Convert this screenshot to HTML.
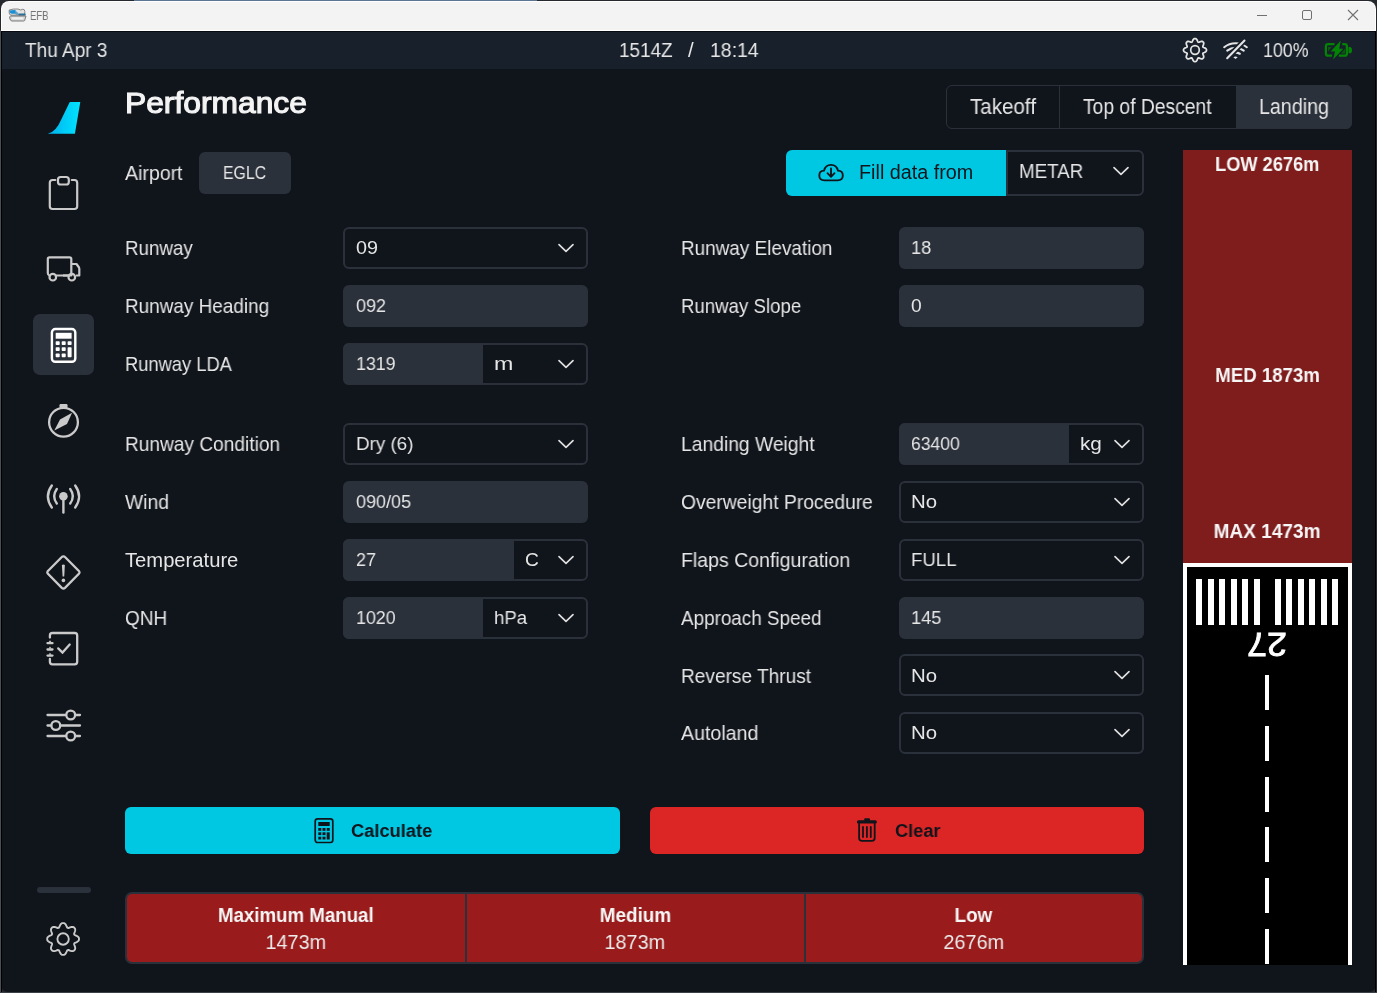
<!DOCTYPE html>
<html><head><meta charset="utf-8">
<style>
*{margin:0;padding:0;box-sizing:border-box}
html,body{width:1377px;height:993px;overflow:hidden;background:#25282d;font-family:"Liberation Sans",sans-serif}
.a{position:absolute}
.t{position:absolute;white-space:nowrap;line-height:1;will-change:transform}
</style></head><body>

<div class="a" style="left:134px;top:0px;width:403px;height:1px;background:#5d7594"></div>
<div class="a" style="left:0px;top:992px;width:1377px;height:1px;background:#3a3f48"></div>
<div class="a" style="left:0px;top:30px;width:1px;height:962px;background:#4a4f56"></div>
<div class="a" style="left:1px;top:1px;width:1375px;height:991px;background:#10141b;border-radius:8px 8px 7px 7px"></div>
<div class="a" style="left:1px;top:1px;width:1375px;height:30px;background:#ffffff;border-radius:8px 8px 0 0"></div>
<div class="a" style="left:2px;top:2px;width:1373px;height:28px;background:#f3f3f3;border-radius:7px 7px 0 0"></div>
<div class="a" style="left:1px;top:31px;width:1375px;height:1px;background:#060b12"></div>
<div class="a" style="left:1px;top:32px;width:1375px;height:37px;background:#18202b"></div>
<div class="a" style="left:1px;top:31px;width:1px;height:961px;background:#000000"></div>
<div class="a" style="left:1375px;top:31px;width:1px;height:961px;background:#000000"></div>
<svg class="a" style="left:8px;top:8px" width="19" height="14" viewBox="0 0 19 14">
<path d="M1.2 2 Q5 0.6 10 1 L12.8 2 L14.8 1.2 Q16.8 1.2 16.8 3.5 V7.2 H3 Q1.2 6.5 1.2 5 Z" fill="#e2e2e2" stroke="#7a7a7a" stroke-width="0.9"/>
<path d="M1.6 2.4 Q4 1.8 7.5 2 L8 5.8 L3.5 5.8 Q1.8 5 1.6 4 Z" fill="#1e8fd2"/>
<path d="M8 3 L10.5 5.5 L9.5 7 L7.5 6.5 Z" fill="#3d8fc0" opacity="0.8"/>
<rect x="10.3" y="5.6" width="7.3" height="1.8" rx="0.6" fill="#2b6e96"/>
<path d="M2.5 8 H18 L16.6 12.6 Q16.4 13 15.8 13 H4 Q3 13 2.6 12.2 L1.6 10 Q1.6 8.5 2.5 8 Z" fill="#d6d6d6" stroke="#6f6f6f" stroke-width="0.9"/>
<rect x="4.2" y="9.3" width="11" height="2" fill="#f0f0f0"/>
</svg>
<div class="t" style="left:30.04px;top:8.83px;font-size:13.08px;color:#757575;transform:scaleX(0.7254);transform-origin:0 0;">EFB</div>
<div class="a" style="left:1257px;top:15px;width:10px;height:1px;background:#707070"></div>
<div class="a" style="left:1302px;top:10px;width:10px;height:10px;border:1px solid #707070;border-radius:2px"></div>
<svg class="a" style="left:1347px;top:9px" width="12" height="12" viewBox="0 0 12 12"><path d="M1 1 L11 11 M11 1 L1 11" stroke="#707070" stroke-width="1.1"/></svg>
<div class="t" style="left:25.42px;top:39.93px;font-size:20.06px;color:#e6e6e6;transform:scaleX(0.9475);transform-origin:0 0;">Thu Apr 3</div>
<div class="t" style="left:618.58px;top:39.88px;font-size:20.35px;color:#e6e6e6;transform:scaleX(0.9289);transform-origin:0 0;">1514Z</div>
<div class="t" style="left:687.80px;top:39.88px;font-size:20.35px;color:#e6e6e6;transform:scaleX(1.0000);transform-origin:0 0;">/</div>
<div class="t" style="left:709.54px;top:39.88px;font-size:20.35px;color:#e6e6e6;transform:scaleX(0.9562);transform-origin:0 0;">18:14</div>
<div class="t" style="left:1263.06px;top:40.16px;font-size:20.20px;color:#e6e6e6;transform:scaleX(0.8817);transform-origin:0 0;">100%</div>
<svg class="a" style="left:1181.1px;top:36.1px" width="28" height="28" viewBox="0 0 28 28"><path d="M14.00 2.60 L14.56 2.65 L15.11 2.88 L15.60 3.33 L16.01 3.98 L16.35 4.71 L16.64 5.41 L16.92 5.95 L17.25 6.25 L17.70 6.28 L18.28 6.09 L18.98 5.80 L19.74 5.52 L20.48 5.36 L21.15 5.38 L21.70 5.61 L22.13 5.97 L22.49 6.40 L22.72 6.95 L22.74 7.62 L22.58 8.36 L22.30 9.12 L22.01 9.82 L21.82 10.40 L21.85 10.85 L22.15 11.18 L22.69 11.46 L23.39 11.75 L24.12 12.09 L24.77 12.50 L25.22 12.99 L25.45 13.54 L25.50 14.10 L25.45 14.66 L25.22 15.21 L24.77 15.70 L24.12 16.11 L23.39 16.45 L22.69 16.74 L22.15 17.02 L21.85 17.35 L21.82 17.80 L22.01 18.38 L22.30 19.08 L22.58 19.84 L22.74 20.58 L22.72 21.25 L22.49 21.80 L22.13 22.23 L21.70 22.59 L21.15 22.82 L20.48 22.84 L19.74 22.68 L18.98 22.40 L18.28 22.11 L17.70 21.92 L17.25 21.95 L16.92 22.25 L16.64 22.79 L16.35 23.49 L16.01 24.22 L15.60 24.87 L15.11 25.32 L14.56 25.55 L14.00 25.60 L13.44 25.55 L12.89 25.32 L12.40 24.87 L11.99 24.22 L11.65 23.49 L11.36 22.79 L11.08 22.25 L10.75 21.95 L10.30 21.92 L9.72 22.11 L9.02 22.40 L8.26 22.68 L7.52 22.84 L6.85 22.82 L6.30 22.59 L5.87 22.23 L5.51 21.80 L5.28 21.25 L5.26 20.58 L5.42 19.84 L5.70 19.08 L5.99 18.38 L6.18 17.80 L6.15 17.35 L5.85 17.02 L5.31 16.74 L4.61 16.45 L3.88 16.11 L3.23 15.70 L2.78 15.21 L2.55 14.66 L2.50 14.10 L2.55 13.54 L2.78 12.99 L3.23 12.50 L3.88 12.09 L4.61 11.75 L5.31 11.46 L5.85 11.18 L6.15 10.85 L6.18 10.40 L5.99 9.82 L5.70 9.12 L5.42 8.36 L5.26 7.62 L5.28 6.95 L5.51 6.40 L5.87 5.97 L6.30 5.61 L6.85 5.38 L7.52 5.36 L8.26 5.52 L9.02 5.80 L9.72 6.09 L10.30 6.28 L10.75 6.25 L11.08 5.95 L11.36 5.41 L11.65 4.71 L11.99 3.98 L12.40 3.33 L12.89 2.88 L13.44 2.65 L14.00 2.60Z" fill="none" stroke="#e4e4e4" stroke-width="1.75" stroke-linejoin="round"/><circle cx="14" cy="14" r="4.3" fill="none" stroke="#e4e4e4" stroke-width="1.7"/></svg>
<svg class="a" style="left:1215px;top:34px" width="40" height="30" viewBox="0 0 40 30">
<path d="M9.17 13.21 A18 18 0 0 1 31.83 13.21 M12.25 16.64 A13.4 13.4 0 0 1 28.75 16.64 M20.80 18.61 A8.6 8.6 0 0 1 24.80 19.75" fill="none" stroke="#e4e4e4" stroke-width="2.1" stroke-linecap="round"/>
<path d="M18.3 23.2 Q20.5 21.6 22.7 23.2 L20.5 25 Z" fill="#e4e4e4"/>
<path d="M12.2 24.2 L29.5 6.5" stroke="#18202b" stroke-width="5.6" stroke-linecap="butt"/>
<path d="M12.2 24.2 L29.5 6.5" stroke="#e4e4e4" stroke-width="2.1" stroke-linecap="round"/>
</svg>
<svg class="a" style="left:1318px;top:34px" width="40" height="30" viewBox="0 0 40 30">
<g fill="none" stroke="#038205" stroke-width="2.3" stroke-linejoin="round">
<path d="M16.5 10.2 H10.2 Q7.9 10.2 7.9 12.5 V19.4 Q7.9 21.7 10.2 21.7 H14"/>
<path d="M24.2 10.2 H26.6 Q28.9 10.2 28.9 12.5 V19.4 Q28.9 21.7 26.6 21.7 H20.8"/>
</g>
<path d="M30.5 13 H31.8 Q34 13 34 16.15 Q34 19.3 31.8 19.3 H30.5 Z" fill="#038205"/>
<path d="M10 13 H13.6 L10 17.8 Z M27 14.5 V19.6 H22.8 Z" fill="#0a5a0e"/>
<path d="M22.8 6.5 L12.6 17.4 H17 L15.1 25.4 L25.3 14.7 H21.2 Z" fill="#038205" stroke="#18202b" stroke-width="1.6" stroke-linejoin="round" paint-order="stroke"/>
</svg>
<svg class="a" style="left:44px;top:98px" width="40" height="40" viewBox="0 0 40 40">
<defs><linearGradient id="lg" x1="0" y1="0" x2="1" y2="0"><stop offset="0" stop-color="#00b0ee"/><stop offset="1" stop-color="#00e4ff"/></linearGradient></defs>
<path d="M26 4 L36.3 4 L30.9 35.8 L3.7 35.8 Q12 34 17 22 L25 5.5 Q25.5 4 26 4 Z" fill="url(#lg)"/></svg>
<svg class="a" style="left:43px;top:171px" width="40" height="44" viewBox="0 0 40 44">
<g fill="none" stroke="#cacaca" stroke-width="2.2" stroke-linecap="round">
<path d="M12.3 9 H9.5 Q6.8 9 6.8 11.7 V35.3 Q6.8 38 9.5 38 H31.5 Q34.2 38 34.2 35.3 V11.7 Q34.2 9 31.5 9 H28.8"/>
<rect x="15" y="6" width="10.8" height="7.5" rx="2.6"/>
</g></svg>
<svg class="a" style="left:43px;top:250px" width="42" height="36" viewBox="0 0 42 36">
<g fill="none" stroke="#cacaca" stroke-width="2.2" stroke-linejoin="round">
<path d="M6.5 25.5 Q4.8 25 4.8 23 V9 Q4.8 7.3 6.5 7.3 H26.6 Q28.3 7.3 28.3 9 V25.5 H12.5"/>
<path d="M28.3 14 H33.5 L36 17.5 Q36.3 18 36.3 19 V25.5 H33"/>
<path d="M20 25.5 H26"/>
<circle cx="9.8" cy="27.2" r="3.3"/><circle cx="28.8" cy="27.2" r="3.3"/>
</g></svg>
<div class="a" style="left:33px;top:314px;width:61px;height:61px;background:#2b313b;border-radius:7px"></div>
<svg class="a" style="left:49px;top:326px" width="30" height="38" viewBox="0 0 30 38">
<rect x="2.9" y="3" width="23.4" height="32.8" rx="3.4" fill="none" stroke="#ffffff" stroke-width="2.4"/>
<rect x="6.7" y="6.8" width="15.9" height="5.9" fill="#fff"/>
<rect x="6.7" y="15.2" width="4" height="3.8" rx="0.8" fill="#fff"/><rect x="12.7" y="15.2" width="4" height="3.8" rx="0.8" fill="#fff"/><rect x="18.6" y="15.2" width="4" height="3.8" rx="0.8" fill="#fff"/>
<rect x="6.7" y="21.2" width="4" height="3.8" rx="0.8" fill="#fff"/><rect x="12.7" y="21.2" width="4" height="3.8" rx="0.8" fill="#fff"/><rect x="18.6" y="21.2" width="4" height="10" rx="0.8" fill="#fff"/>
<rect x="6.7" y="27.4" width="4" height="3.8" rx="0.8" fill="#fff"/><rect x="12.7" y="27.4" width="4" height="3.8" rx="0.8" fill="#fff"/>
</svg>
<svg class="a" style="left:43px;top:400px" width="42" height="42" viewBox="0 0 42 42">
<circle cx="20.5" cy="22.2" r="14.4" fill="none" stroke="#cacaca" stroke-width="2.3"/>
<rect x="16.5" y="4" width="8" height="4" rx="1.2" fill="#cacaca"/>
<path d="M29.1 12.8 L24 24 L11.3 30.6 L17 19.5 Z" fill="#cacaca"/>
</svg>
<svg class="a" style="left:43px;top:476px" width="42" height="42" viewBox="0 0 42 42">
<g fill="none" stroke="#cacaca" stroke-width="2.4" stroke-linecap="round">
<path d="M8.8 9.5 Q1 20.5 8.8 31.5"/><path d="M32.2 9.5 Q40 20.5 32.2 31.5"/>
<path d="M13.8 13 Q8.5 20.3 13.8 27.5"/><path d="M27.2 13 Q32.5 20.3 27.2 27.5"/>
<path d="M20.4 21 V36.5"/>
</g><circle cx="20.4" cy="20.3" r="4.3" fill="#cacaca"/></svg>
<svg class="a" style="left:43px;top:552px" width="42" height="42" viewBox="0 0 42 42">
<path d="M20.4 4.3 Q21.4 4.3 22 5 L36.1 19.2 Q37 20.4 36.1 21.6 L22 35.8 Q20.4 37.2 18.8 35.8 L4.7 21.6 Q3.8 20.4 4.7 19.2 L18.8 5 Q19.4 4.3 20.4 4.3 Z" fill="none" stroke="#cacaca" stroke-width="2.3"/>
<path d="M18.9 13 Q20.4 11.8 21.9 13 L21.2 24.5 H19.6 Z" fill="#cacaca"/><circle cx="20.4" cy="28.4" r="1.8" fill="#cacaca"/>
</svg>
<svg class="a" style="left:43px;top:627px" width="42" height="42" viewBox="0 0 42 42">
<g fill="none" stroke="#cacaca" stroke-width="2.3" stroke-linecap="round">
<path d="M6.9 10.5 V8.5 Q6.9 6 9.4 6 H31.7 Q34.2 6 34.2 8.5 V34.8 Q34.2 37.3 31.7 37.3 H9.4 Q6.9 37.3 6.9 34.8 V32"/>
<path d="M4.5 16.2 H9.5 M4.5 22.5 H9.5 M4.5 28.6 H9.5"/>
<path d="M15.2 21.4 L19.5 25.6 L26.7 17.5"/>
</g>
<path d="M5.5 15.3 L7 13.3 L8.5 15.3 Z M5.5 21.6 L7 19.6 L8.5 21.6 Z M5.5 27.7 L7 25.7 L8.5 27.7 Z" fill="#cacaca"/>
</svg>
<svg class="a" style="left:43px;top:703px" width="42" height="42" viewBox="0 0 42 42">
<g fill="none" stroke="#cacaca" stroke-width="2.3" stroke-linecap="round">
<path d="M4.5 12 H22.8 M32.6 12 H37"/><circle cx="27.7" cy="12" r="4.4"/>
<path d="M4.5 22.5 H8 M17.7 22.5 H37"/><circle cx="12.8" cy="22.5" r="4.4"/>
<path d="M4.5 33 H22.8 M32.6 33 H37"/><circle cx="27.7" cy="33" r="4.4"/>
</g></svg>
<div class="a" style="left:37px;top:887px;width:54px;height:6px;background:#2b313b;border-radius:3px"></div>
<svg class="a" style="left:43px;top:919px" width="40" height="40" viewBox="0 0 40 40"><path d="M20.10 4.10 L20.88 4.17 L21.63 4.47 L22.32 5.06 L22.90 5.91 L23.39 6.87 L23.80 7.80 L24.21 8.51 L24.69 8.91 L25.32 8.97 L26.11 8.75 L27.06 8.39 L28.08 8.05 L29.10 7.87 L30.00 7.93 L30.75 8.25 L31.34 8.76 L31.85 9.35 L32.17 10.10 L32.23 11.00 L32.05 12.02 L31.71 13.04 L31.35 13.99 L31.13 14.78 L31.19 15.41 L31.59 15.89 L32.30 16.30 L33.23 16.71 L34.19 17.20 L35.04 17.78 L35.63 18.47 L35.93 19.22 L36.00 20.00 L35.93 20.78 L35.63 21.53 L35.04 22.22 L34.19 22.80 L33.23 23.29 L32.30 23.70 L31.59 24.11 L31.19 24.59 L31.13 25.22 L31.35 26.01 L31.71 26.96 L32.05 27.98 L32.23 29.00 L32.17 29.90 L31.85 30.65 L31.34 31.24 L30.75 31.75 L30.00 32.07 L29.10 32.13 L28.08 31.95 L27.06 31.61 L26.11 31.25 L25.32 31.03 L24.69 31.09 L24.21 31.49 L23.80 32.20 L23.39 33.13 L22.90 34.09 L22.32 34.94 L21.63 35.53 L20.88 35.83 L20.10 35.90 L19.32 35.83 L18.57 35.53 L17.88 34.94 L17.30 34.09 L16.81 33.13 L16.40 32.20 L15.99 31.49 L15.51 31.09 L14.88 31.03 L14.09 31.25 L13.14 31.61 L12.12 31.95 L11.10 32.13 L10.20 32.07 L9.45 31.75 L8.86 31.24 L8.35 30.65 L8.03 29.90 L7.97 29.00 L8.15 27.98 L8.49 26.96 L8.85 26.01 L9.07 25.22 L9.01 24.59 L8.61 24.11 L7.90 23.70 L6.97 23.29 L6.01 22.80 L5.16 22.22 L4.57 21.53 L4.27 20.78 L4.20 20.00 L4.27 19.22 L4.57 18.47 L5.16 17.78 L6.01 17.20 L6.97 16.71 L7.90 16.30 L8.61 15.89 L9.01 15.41 L9.07 14.78 L8.85 13.99 L8.49 13.04 L8.15 12.02 L7.97 11.00 L8.03 10.10 L8.35 9.35 L8.86 8.76 L9.45 8.25 L10.20 7.93 L11.10 7.87 L12.12 8.05 L13.14 8.39 L14.09 8.75 L14.88 8.97 L15.51 8.91 L15.99 8.51 L16.40 7.80 L16.81 6.87 L17.30 5.91 L17.88 5.06 L18.57 4.47 L19.32 4.17 L20.10 4.10Z" fill="none" stroke="#cacaca" stroke-width="1.9" stroke-linejoin="round"/><circle cx="20.1" cy="20" r="5.7" fill="none" stroke="#cacaca" stroke-width="1.9"/></svg>
<div class="t" style="left:124.96px;top:88.27px;font-size:29.94px;color:#f4f4f4;transform:scaleX(1.0616);transform-origin:0 0;-webkit-text-stroke:1.15px #f4f4f4;">Performance</div>
<div class="a" style="left:946px;top:85px;width:406px;height:44px;border:1.5px solid #2b313b;border-radius:6px"></div>
<div class="a" style="left:1235.5px;top:85px;width:116.5px;height:44px;background:#2b313b;border-radius:0 6px 6px 0"></div>
<div class="a" style="left:1059px;top:86px;width:1px;height:42px;background:#2b313b"></div>
<div class="t" style="left:969.59px;top:95.95px;font-size:21.22px;color:#e6e6e6;transform:scaleX(0.9698);transform-origin:0 0;">Takeoff</div>
<div class="t" style="left:1082.81px;top:95.95px;font-size:21.22px;color:#e6e6e6;transform:scaleX(0.9084);transform-origin:0 0;">Top of Descent</div>
<div class="t" style="left:1258.53px;top:95.95px;font-size:21.22px;color:#e6e6e6;transform:scaleX(0.9259);transform-origin:0 0;">Landing</div>
<div class="t" style="left:125.20px;top:163.36px;font-size:20.20px;color:#e6e6e6;transform:scaleX(0.9680);transform-origin:0 0;">Airport</div>
<div class="a" style="left:199px;top:152px;width:92px;height:42px;background:#2b313b;border-radius:6px"></div>
<div class="t" style="left:223.33px;top:163.63px;font-size:18.46px;color:#e6e6e6;transform:scaleX(0.8568);transform-origin:0 0;">EGLC</div>
<div class="t" style="left:125.20px;top:238.36px;font-size:20.20px;color:#e6e6e6;transform:scaleX(0.9304);transform-origin:0 0;">Runway</div>
<div class="a" style="left:343px;top:227px;width:245.4px;height:42px;border:2px solid #2b313b;border-radius:6px"></div>
<div class="t" style="left:355.50px;top:238.37px;font-size:19.19px;color:#e6e6e6;transform:scaleX(1.0297);transform-origin:0 0;">09</div>
<svg class="a" style="left:556.80px;top:242.00px" width="18" height="12" viewBox="0 0 18 12"><path d="M2 2.6 L9 9.4 L16 2.6" fill="none" stroke="#e0e0e0" stroke-width="1.65" stroke-linecap="round" stroke-linejoin="round"/></svg>
<div class="t" style="left:125.20px;top:296.36px;font-size:20.20px;color:#e6e6e6;transform:scaleX(0.9379);transform-origin:0 0;">Runway Heading</div>
<div class="a" style="left:343px;top:285px;width:245.4px;height:42px;background:#2b313b;border-radius:6px"></div>
<div class="t" style="left:355.50px;top:296.37px;font-size:19.19px;color:#e6e6e6;transform:scaleX(0.9387);transform-origin:0 0;">092</div>
<div class="t" style="left:125.20px;top:354.06px;font-size:20.20px;color:#e6e6e6;transform:scaleX(0.9082);transform-origin:0 0;">Runway LDA</div>
<div class="a" style="left:343px;top:342.7px;width:245.4px;height:42px;border:2px solid #2b313b;border-radius:6px;background:#10141b"></div>
<div class="a" style="left:343px;top:342.7px;width:140.3px;height:42px;background:#2b313b;border-radius:6px 0 0 6px"></div>
<div class="t" style="left:355.50px;top:354.07px;font-size:19.19px;color:#e6e6e6;transform:scaleX(0.9272);transform-origin:0 0;">1319</div>
<div class="t" style="left:494.10px;top:354.07px;font-size:19.19px;color:#e6e6e6;transform:scaleX(1.2094);transform-origin:0 0;">m</div>
<svg class="a" style="left:556.80px;top:357.70px" width="18" height="12" viewBox="0 0 18 12"><path d="M2 2.6 L9 9.4 L16 2.6" fill="none" stroke="#e0e0e0" stroke-width="1.65" stroke-linecap="round" stroke-linejoin="round"/></svg>
<div class="t" style="left:125.20px;top:434.36px;font-size:20.20px;color:#e6e6e6;transform:scaleX(0.9468);transform-origin:0 0;">Runway Condition</div>
<div class="a" style="left:343px;top:423px;width:245.4px;height:42px;border:2px solid #2b313b;border-radius:6px"></div>
<div class="t" style="left:355.50px;top:434.37px;font-size:19.19px;color:#e6e6e6;transform:scaleX(0.9798);transform-origin:0 0;">Dry (6)</div>
<svg class="a" style="left:556.80px;top:438.00px" width="18" height="12" viewBox="0 0 18 12"><path d="M2 2.6 L9 9.4 L16 2.6" fill="none" stroke="#e0e0e0" stroke-width="1.65" stroke-linecap="round" stroke-linejoin="round"/></svg>
<div class="t" style="left:125.20px;top:492.36px;font-size:20.20px;color:#e6e6e6;transform:scaleX(0.9575);transform-origin:0 0;">Wind</div>
<div class="a" style="left:343px;top:481px;width:245.4px;height:42px;background:#2b313b;border-radius:6px"></div>
<div class="t" style="left:355.50px;top:492.37px;font-size:19.19px;color:#e6e6e6;transform:scaleX(0.9392);transform-origin:0 0;">090/05</div>
<div class="t" style="left:125.20px;top:550.06px;font-size:20.20px;color:#e6e6e6;transform:scaleX(0.9971);transform-origin:0 0;">Temperature</div>
<div class="a" style="left:343px;top:538.7px;width:245.4px;height:42px;border:2px solid #2b313b;border-radius:6px;background:#10141b"></div>
<div class="a" style="left:343px;top:538.7px;width:170.8px;height:42px;background:#2b313b;border-radius:6px 0 0 6px"></div>
<div class="t" style="left:355.50px;top:550.07px;font-size:19.19px;color:#e6e6e6;transform:scaleX(0.9369);transform-origin:0 0;">27</div>
<div class="t" style="left:524.60px;top:550.07px;font-size:19.19px;color:#e6e6e6;transform:scaleX(0.9686);transform-origin:0 0;">C</div>
<svg class="a" style="left:556.80px;top:553.70px" width="18" height="12" viewBox="0 0 18 12"><path d="M2 2.6 L9 9.4 L16 2.6" fill="none" stroke="#e0e0e0" stroke-width="1.65" stroke-linecap="round" stroke-linejoin="round"/></svg>
<div class="t" style="left:125.20px;top:607.86px;font-size:20.20px;color:#e6e6e6;transform:scaleX(0.9416);transform-origin:0 0;">QNH</div>
<div class="a" style="left:343px;top:596.5px;width:245.4px;height:42px;border:2px solid #2b313b;border-radius:6px;background:#10141b"></div>
<div class="a" style="left:343px;top:596.5px;width:140.3px;height:42px;background:#2b313b;border-radius:6px 0 0 6px"></div>
<div class="t" style="left:355.50px;top:607.87px;font-size:19.19px;color:#e6e6e6;transform:scaleX(0.9288);transform-origin:0 0;">1020</div>
<div class="t" style="left:494.10px;top:607.87px;font-size:19.19px;color:#e6e6e6;transform:scaleX(0.9679);transform-origin:0 0;">hPa</div>
<svg class="a" style="left:556.80px;top:611.50px" width="18" height="12" viewBox="0 0 18 12"><path d="M2 2.6 L9 9.4 L16 2.6" fill="none" stroke="#e0e0e0" stroke-width="1.65" stroke-linecap="round" stroke-linejoin="round"/></svg>
<div class="t" style="left:681.20px;top:238.36px;font-size:20.20px;color:#e6e6e6;transform:scaleX(0.9370);transform-origin:0 0;">Runway Elevation</div>
<div class="a" style="left:898.8px;top:227px;width:245.4px;height:42px;background:#2b313b;border-radius:6px"></div>
<div class="t" style="left:911.30px;top:238.37px;font-size:19.19px;color:#e6e6e6;transform:scaleX(0.9481);transform-origin:0 0;">18</div>
<div class="t" style="left:681.20px;top:296.36px;font-size:20.20px;color:#e6e6e6;transform:scaleX(0.9234);transform-origin:0 0;">Runway Slope</div>
<div class="a" style="left:898.8px;top:285px;width:245.4px;height:42px;background:#2b313b;border-radius:6px"></div>
<div class="t" style="left:911.30px;top:296.37px;font-size:19.19px;color:#e6e6e6;transform:scaleX(0.9773);transform-origin:0 0;">0</div>
<div class="t" style="left:681.20px;top:434.36px;font-size:20.20px;color:#e6e6e6;transform:scaleX(0.9552);transform-origin:0 0;">Landing Weight</div>
<div class="a" style="left:898.8px;top:423px;width:245.4px;height:42px;border:2px solid #2b313b;border-radius:6px;background:#10141b"></div>
<div class="a" style="left:898.8px;top:423px;width:170.2px;height:42px;background:#2b313b;border-radius:6px 0 0 6px"></div>
<div class="t" style="left:911.30px;top:434.37px;font-size:19.19px;color:#e6e6e6;transform:scaleX(0.9137);transform-origin:0 0;">63400</div>
<div class="t" style="left:1079.80px;top:434.37px;font-size:19.19px;color:#e6e6e6;transform:scaleX(1.0790);transform-origin:0 0;">kg</div>
<svg class="a" style="left:1112.60px;top:438.00px" width="18" height="12" viewBox="0 0 18 12"><path d="M2 2.6 L9 9.4 L16 2.6" fill="none" stroke="#e0e0e0" stroke-width="1.65" stroke-linecap="round" stroke-linejoin="round"/></svg>
<div class="t" style="left:681.20px;top:492.36px;font-size:20.20px;color:#e6e6e6;transform:scaleX(0.9553);transform-origin:0 0;">Overweight Procedure</div>
<div class="a" style="left:898.8px;top:481px;width:245.4px;height:42px;border:2px solid #2b313b;border-radius:6px"></div>
<div class="t" style="left:911.30px;top:492.37px;font-size:19.19px;color:#e6e6e6;transform:scaleX(1.0627);transform-origin:0 0;">No</div>
<svg class="a" style="left:1112.60px;top:496.00px" width="18" height="12" viewBox="0 0 18 12"><path d="M2 2.6 L9 9.4 L16 2.6" fill="none" stroke="#e0e0e0" stroke-width="1.65" stroke-linecap="round" stroke-linejoin="round"/></svg>
<div class="t" style="left:681.20px;top:550.06px;font-size:20.20px;color:#e6e6e6;transform:scaleX(0.9670);transform-origin:0 0;">Flaps Configuration</div>
<div class="a" style="left:898.8px;top:538.7px;width:245.4px;height:42px;border:2px solid #2b313b;border-radius:6px"></div>
<div class="t" style="left:911.30px;top:550.07px;font-size:19.19px;color:#e6e6e6;transform:scaleX(0.9710);transform-origin:0 0;">FULL</div>
<svg class="a" style="left:1112.60px;top:553.70px" width="18" height="12" viewBox="0 0 18 12"><path d="M2 2.6 L9 9.4 L16 2.6" fill="none" stroke="#e0e0e0" stroke-width="1.65" stroke-linecap="round" stroke-linejoin="round"/></svg>
<div class="t" style="left:681.20px;top:607.86px;font-size:20.20px;color:#e6e6e6;transform:scaleX(0.9340);transform-origin:0 0;">Approach Speed</div>
<div class="a" style="left:898.8px;top:596.5px;width:245.4px;height:42px;background:#2b313b;border-radius:6px"></div>
<div class="t" style="left:911.30px;top:607.87px;font-size:19.19px;color:#e6e6e6;transform:scaleX(0.9501);transform-origin:0 0;">145</div>
<div class="t" style="left:681.20px;top:665.56px;font-size:20.20px;color:#e6e6e6;transform:scaleX(0.9447);transform-origin:0 0;">Reverse Thrust</div>
<div class="a" style="left:898.8px;top:654.2px;width:245.4px;height:42px;border:2px solid #2b313b;border-radius:6px"></div>
<div class="t" style="left:911.30px;top:665.57px;font-size:19.19px;color:#e6e6e6;transform:scaleX(1.0627);transform-origin:0 0;">No</div>
<svg class="a" style="left:1112.60px;top:669.20px" width="18" height="12" viewBox="0 0 18 12"><path d="M2 2.6 L9 9.4 L16 2.6" fill="none" stroke="#e0e0e0" stroke-width="1.65" stroke-linecap="round" stroke-linejoin="round"/></svg>
<div class="t" style="left:681.20px;top:723.36px;font-size:20.20px;color:#e6e6e6;transform:scaleX(0.9708);transform-origin:0 0;">Autoland</div>
<div class="a" style="left:898.8px;top:712px;width:245.4px;height:42px;border:2px solid #2b313b;border-radius:6px"></div>
<div class="t" style="left:911.30px;top:723.37px;font-size:19.19px;color:#e6e6e6;transform:scaleX(1.0627);transform-origin:0 0;">No</div>
<svg class="a" style="left:1112.60px;top:727.00px" width="18" height="12" viewBox="0 0 18 12"><path d="M2 2.6 L9 9.4 L16 2.6" fill="none" stroke="#e0e0e0" stroke-width="1.65" stroke-linecap="round" stroke-linejoin="round"/></svg>
<div class="a" style="left:786px;top:150px;width:220px;height:46px;background:#00c8e3;border-radius:6px 0 0 6px"></div>
<svg class="a" style="left:816px;top:160px" width="30" height="24" viewBox="0 0 30 24">
<g fill="none" stroke="#10141b" stroke-width="1.85" stroke-linecap="round" stroke-linejoin="round">
<path d="M8.5 20.3 H21.5 Q26.8 20.3 26.8 15.5 Q26.8 11 22 10.7 Q20.8 4.8 15 4.8 Q9.3 4.8 8 10.7 Q3.3 11 3.3 15.5 Q3.3 20.3 8.5 20.3 Z"/>
<path d="M15 8.5 V16.5 M11.5 13.2 L15 16.8 L18.5 13.2"/>
</g></svg>
<div class="t" style="left:858.92px;top:162.68px;font-size:19.77px;color:#10141b;transform:scaleX(1.0010);transform-origin:0 0;">Fill data from</div>
<div class="a" style="left:1006px;top:150px;width:138px;height:46px;border:2px solid #2b313b;border-radius:0 6px 6px 0"></div>
<div class="t" style="left:1018.50px;top:161.52px;font-size:19.48px;color:#e6e6e6;transform:scaleX(0.9615);transform-origin:0 0;">METAR</div>
<svg class="a" style="left:1112.40px;top:165.00px" width="18" height="12" viewBox="0 0 18 12"><path d="M2 2.6 L9 9.4 L16 2.6" fill="none" stroke="#e0e0e0" stroke-width="1.65" stroke-linecap="round" stroke-linejoin="round"/></svg>
<div class="a" style="left:1183px;top:150px;width:169px;height:413px;background:#7f1d1d"></div>
<div class="t" style="left:1209.13px;top:154.38px;font-size:20.35px;font-weight:bold;color:#f6f6f6;transform:scaleX(0.8964);transform-origin:58.27px 0;">LOW 2676m</div>
<div class="t" style="left:1211.88px;top:365.88px;font-size:19.77px;font-weight:bold;color:#f6f6f6;transform:scaleX(0.9412);transform-origin:55.52px 0;">MED 1873m</div>
<div class="t" style="left:1212.09px;top:521.65px;font-size:19.62px;font-weight:bold;color:#f6f6f6;transform:scaleX(0.9705);transform-origin:55.11px 0;">MAX 1473m</div>
<div class="a" style="left:1183px;top:563px;width:169px;height:402px;background:#000;border:4px solid #fff;border-bottom:none"></div>
<div class="a" style="left:1196px;top:579px;width:6px;height:46px;background:#fff"></div>
<div class="a" style="left:1274.6px;top:579px;width:6px;height:46px;background:#fff"></div>
<div class="a" style="left:1207.57px;top:579px;width:6px;height:46px;background:#fff"></div>
<div class="a" style="left:1286.17px;top:579px;width:6px;height:46px;background:#fff"></div>
<div class="a" style="left:1219.14px;top:579px;width:6px;height:46px;background:#fff"></div>
<div class="a" style="left:1297.74px;top:579px;width:6px;height:46px;background:#fff"></div>
<div class="a" style="left:1230.71px;top:579px;width:6px;height:46px;background:#fff"></div>
<div class="a" style="left:1309.31px;top:579px;width:6px;height:46px;background:#fff"></div>
<div class="a" style="left:1242.28px;top:579px;width:6px;height:46px;background:#fff"></div>
<div class="a" style="left:1320.88px;top:579px;width:6px;height:46px;background:#fff"></div>
<div class="a" style="left:1253.85px;top:579px;width:6px;height:46px;background:#fff"></div>
<div class="a" style="left:1332.45px;top:579px;width:6px;height:46px;background:#fff"></div>
<div class="t" style="left:1222.3px;top:614px;width:90px;height:60px;line-height:60px;text-align:center;font-size:33px;color:#fff;transform:rotate(180deg) scaleX(1.09);-webkit-text-stroke:0.8px #fff">27</div>
<div class="a" style="left:1265px;top:675px;width:4px;height:35px;background:#fff"></div>
<div class="a" style="left:1265px;top:725.8px;width:4px;height:35px;background:#fff"></div>
<div class="a" style="left:1265px;top:776.6px;width:4px;height:35px;background:#fff"></div>
<div class="a" style="left:1265px;top:827.4px;width:4px;height:35px;background:#fff"></div>
<div class="a" style="left:1265px;top:878.2px;width:4px;height:35px;background:#fff"></div>
<div class="a" style="left:1265px;top:929px;width:4px;height:35px;background:#fff"></div>
<div class="a" style="left:125px;top:807.2px;width:495px;height:46.6px;background:#00c8e3;border-radius:6px"></div>
<svg class="a" style="left:313px;top:817px" width="22" height="27" viewBox="0 0 22 27">
<rect x="2.2" y="1.9" width="17.6" height="23.6" rx="2.4" fill="none" stroke="#10141b" stroke-width="1.7"/>
<rect x="5.3" y="5" width="11.4" height="4" fill="#10141b"/>
<g fill="#10141b"><rect x="5.3" y="11" width="3" height="2.8"/><rect x="9.5" y="11" width="3" height="2.8"/><rect x="13.7" y="11" width="3" height="2.8"/>
<rect x="5.3" y="15.3" width="3" height="2.8"/><rect x="9.5" y="15.3" width="3" height="2.8"/><rect x="13.7" y="15.3" width="3" height="7.2"/>
<rect x="5.3" y="19.7" width="3" height="2.8"/><rect x="9.5" y="19.7" width="3" height="2.8"/></g>
</svg>
<div class="t" style="left:350.87px;top:821.79px;font-size:18.75px;font-weight:bold;color:#10141b;transform:scaleX(0.9746);transform-origin:0 0;">Calculate</div>
<div class="a" style="left:650px;top:807.2px;width:494px;height:46.6px;background:#dc2626;border-radius:6px"></div>
<svg class="a" style="left:855px;top:816px" width="24" height="28" viewBox="0 0 24 28">
<g fill="none" stroke="#10141b" stroke-width="1.8" stroke-linecap="round" stroke-linejoin="round">
<rect x="2.8" y="5.1" width="18.2" height="1.6" rx="0.8"/>
<path d="M4.1 7.6 V22 Q4.1 24.9 7 24.9 H16.8 Q19.7 24.9 19.7 22 V7.6"/>
<path d="M8 11 V21 M11.9 11 V21 M15.8 11 V21"/>
</g><rect x="9.2" y="2.3" width="5.8" height="2.6" rx="1" fill="#10141b"/></svg>
<div class="t" style="left:894.67px;top:821.79px;font-size:18.75px;font-weight:bold;color:#10141b;transform:scaleX(0.9697);transform-origin:0 0;">Clear</div>
<div class="a" style="left:125px;top:892px;width:1019px;height:72px;background:#991b1b;border:2px solid #2b313b;border-radius:7px"></div>
<div class="a" style="left:464.5px;top:894px;width:2px;height:68px;background:#2b313b"></div>
<div class="a" style="left:803.5px;top:894px;width:2px;height:68px;background:#2b313b"></div>
<div class="t" style="left:210.65px;top:904.98px;font-size:20.35px;font-weight:bold;color:#f6f6f6;transform:scaleX(0.9181);transform-origin:84.75px 0;">Maximum Manual</div>
<div class="t" style="left:263.52px;top:931.67px;font-size:20.78px;color:#ececec;transform:scaleX(0.9550);transform-origin:31.88px 0;">1473m</div>
<div class="t" style="left:596.52px;top:904.98px;font-size:20.35px;font-weight:bold;color:#f6f6f6;transform:scaleX(0.9300);transform-origin:38.48px 0;">Medium</div>
<div class="t" style="left:603.12px;top:931.67px;font-size:20.78px;color:#ececec;transform:scaleX(0.9550);transform-origin:31.88px 0;">1873m</div>
<div class="t" style="left:952.96px;top:904.98px;font-size:20.35px;font-weight:bold;color:#f6f6f6;transform:scaleX(0.9300);transform-origin:21.04px 0;">Low</div>
<div class="t" style="left:942.38px;top:931.67px;font-size:20.78px;color:#ececec;transform:scaleX(0.9550);transform-origin:31.62px 0;">2676m</div>
</body></html>
